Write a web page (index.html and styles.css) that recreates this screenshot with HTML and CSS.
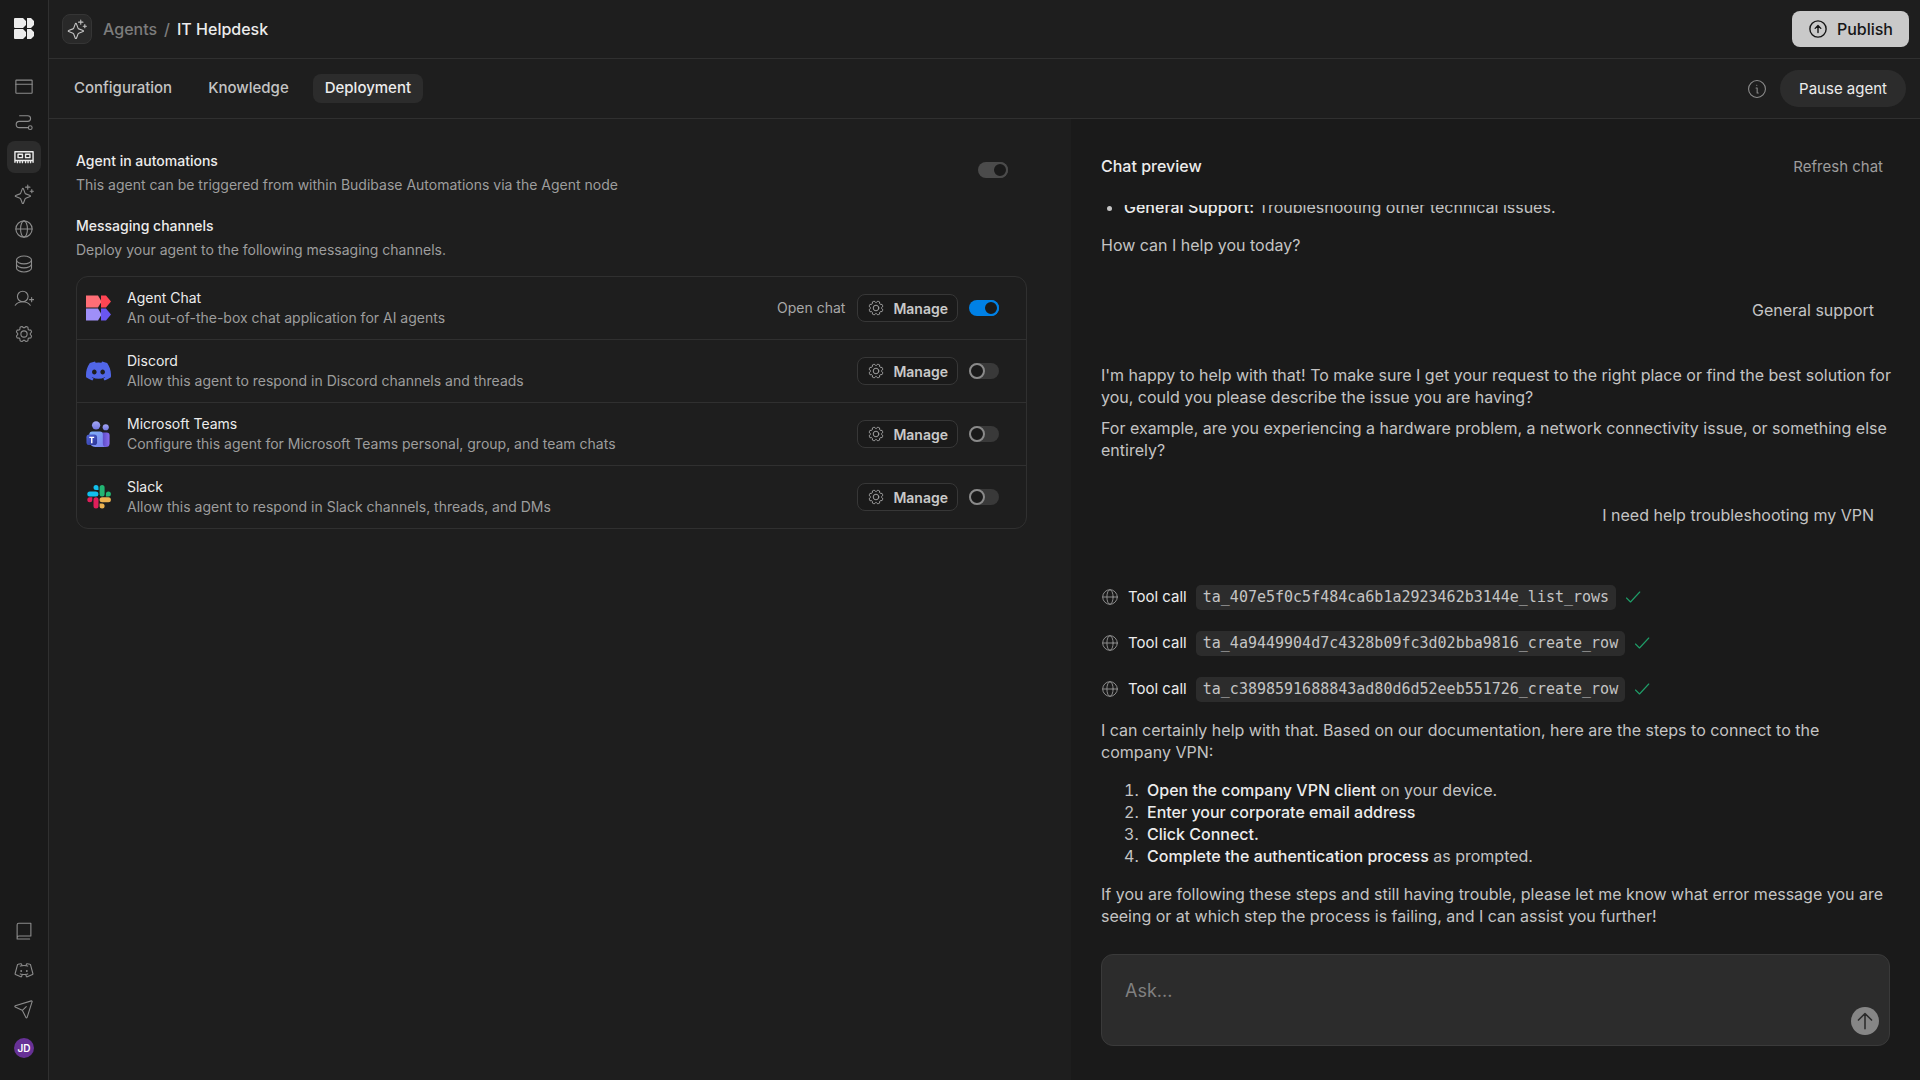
FILE: index.html
```html
<!DOCTYPE html>
<html lang="en">
<head>
  <meta charset="UTF-8">
  <meta name="viewport" content="width=device-width, initial-scale=1.0">
  <title>IT Helpdesk - Agents</title>
  <link rel="stylesheet" href="styles.css">
</head>
<body>
  <!-- Icon sprite -->
  <svg class="sprite" aria-hidden="true">
    <symbol id="i-browser" viewBox="0 0 256 256"><rect x="24" y="40" width="208" height="168" rx="6"/><path d="M24 92h208"/></symbol>
    <symbol id="i-path" viewBox="0 0 256 256"><circle cx="208" cy="200" r="24"/><path d="M72 48h104a36 36 0 0 1 0 72H68a40 40 0 0 0 0 80h116"/></symbol>
    <symbol id="i-memory" viewBox="0 0 256 256"><path d="M12 196V60h232v136M12 172h232M44 172v28M76 172v28M108 172v28M148 172v28M180 172v28M212 172v28"/><rect x="52" y="92" width="56" height="44"/><rect x="148" y="92" width="56" height="44"/></symbol>
    <symbol id="i-sparkle" viewBox="0 0 256 256"><path d="M84.27 171.73l-55.09-20.3a7.92 7.92 0 0 1 0-14.86l55.09-20.3a16 16 0 0 0 9.46-9.46l20.3-55.09a7.92 7.92 0 0 1 14.86 0l20.3 55.09a16 16 0 0 0 9.46 9.46l55.09 20.3a7.92 7.92 0 0 1 0 14.86l-55.09 20.3a16 16 0 0 0-9.46 9.46l-20.3 55.09a7.92 7.92 0 0 1-14.86 0l-20.3-55.09a16 16 0 0 0-9.46-9.46Z" transform="translate(-8 10)"/><path d="M176 12v56M148 40h56M228 72v40M208 92h40"/></symbol>
    <symbol id="i-globe" viewBox="0 0 256 256"><circle cx="128" cy="128" r="104"/><ellipse cx="128" cy="128" rx="44" ry="104"/><path d="M24 128h208"/></symbol>
    <symbol id="i-database" viewBox="0 0 256 256"><ellipse cx="128" cy="76" rx="96" ry="50"/><path d="M32 76v52c0 28 43 50 96 50s96-22 96-50V76M32 128v52c0 28 43 50 96 50s96-22 96-50v-52"/></symbol>
    <symbol id="i-user-plus" viewBox="0 0 256 256"><circle cx="112" cy="96" r="68"/><path d="M16 208c23-29 56-44 96-44s73 15 96 44M200 136h52M226 110v52"/></symbol>
    <symbol id="i-gear" viewBox="0 0 256 256"><circle cx="128" cy="128" r="40"/><path d="M41.43 178.09A99.14 99.14 0 0 1 31.36 153.8l16.78-21a81.59 81.59 0 0 1 0-9.64l-16.77-21a99.43 99.43 0 0 1 10.05-24.3l26.71-3a81 81 0 0 1 6.81-6.81l3-26.7A99.14 99.14 0 0 1 102.2 31.36l21 16.78a81.59 81.59 0 0 1 9.64 0l21-16.77a99.43 99.43 0 0 1 24.3 10.05l3 26.71a81 81 0 0 1 6.81 6.81l26.7 3a99.14 99.14 0 0 1 10.07 24.29l-16.78 21a81.59 81.59 0 0 1 0 9.64l16.77 21a99.43 99.43 0 0 1-10 24.3l-26.71 3a81 81 0 0 1-6.81 6.81l-3 26.7a99.14 99.14 0 0 1-24.29 10.07l-21-16.78a81.59 81.59 0 0 1-9.64 0l-21 16.77a99.43 99.43 0 0 1-24.3-10l-3-26.71a81 81 0 0 1-6.81-6.81Z"/></symbol>
    <symbol id="i-book" viewBox="0 0 256 256"><path d="M40 220V48a20 20 0 0 1 20-20h156v164H64a24 24 0 0 0-24 24v14h160"/></symbol>
    <symbol id="i-discord" viewBox="0 0 256 256"><path d="M153 74l6-20a8 8 0 0 1 9-6l36 6a8 8 0 0 1 7 6l31 116a8 8 0 0 1-5 9l-68 30a8 8 0 0 1-11-5l-8-27M103 74l-6-20a8 8 0 0 0-9-6l-36 6a8 8 0 0 0-7 6L14 176a8 8 0 0 0 5 9l68 30a8 8 0 0 0 11-5l8-27M80 78a179 179 0 0 1 96 0M176 178a179 179 0 0 1-96 0"/><circle cx="92" cy="140" r="5"/><circle cx="164" cy="140" r="5"/></symbol>
    <symbol id="i-send" viewBox="0 0 256 256"><path d="M232 34a8 8 0 0 0-10-10L16 86a8 8 0 0 0-1 15l90 44a8 8 0 0 1 4 4l44 88a8 8 0 0 0 15-1ZM107 147l50-50"/></symbol>
    <symbol id="i-up-circle" viewBox="0 0 256 256"><circle cx="128" cy="128" r="104"/><path d="M92 120l36-36 36 36M128 84v90"/></symbol>
    <symbol id="i-info" viewBox="0 0 256 256"><circle cx="128" cy="128" r="108"/><path d="M116 116h14v64h14M124 80h2"/></symbol>
    <symbol id="i-check" viewBox="0 0 256 256"><path d="M24 144l64 64L236 48"/></symbol>
    <symbol id="i-arrow-up" viewBox="0 0 256 256"><path d="M128 228V32M44 116l84-84 84 84"/></symbol>
  </svg>

  <div class="app">
    <nav class="rail">
      <a class="rail-logo" href="#" aria-label="Home">
        <svg viewBox="0 0 20 21"><path d="M1 0h8l3 3v4l-3 3H1a1 1 0 0 1-1-1V1a1 1 0 0 1 1-1ZM1 11h8l3 3v4l-3 3H1a1 1 0 0 1-1-1v-8a1 1 0 0 1 1-1ZM13 0h4l3 3v4l-3 3h-4ZM13 11h4l3 3v4l-3 3h-4Z"/></svg>
      </a>
      <div class="rail-group">
        <a class="rail-item" href="#" aria-label="Apps"><svg class="icon"><use href="#i-browser"/></svg></a>
        <a class="rail-item" href="#" aria-label="Automations"><svg class="icon"><use href="#i-path"/></svg></a>
        <a class="rail-item active" href="#" aria-label="Agents"><svg class="icon"><use href="#i-memory"/></svg></a>
      </div>
      <div class="rail-group">
        <a class="rail-item" href="#" aria-label="AI"><svg class="icon"><use href="#i-sparkle"/></svg></a>
        <a class="rail-item" href="#" aria-label="APIs"><svg class="icon"><use href="#i-globe"/></svg></a>
        <a class="rail-item" href="#" aria-label="Data"><svg class="icon"><use href="#i-database"/></svg></a>
        <a class="rail-item" href="#" aria-label="Invite users"><svg class="icon"><use href="#i-user-plus"/></svg></a>
        <a class="rail-item" href="#" aria-label="Settings"><svg class="icon"><use href="#i-gear"/></svg></a>
      </div>
      <div class="rail-group rail-bottom">
        <a class="rail-item" href="#" aria-label="Documentation"><svg class="icon"><use href="#i-book"/></svg></a>
        <a class="rail-item" href="#" aria-label="Discord"><svg class="icon"><use href="#i-discord"/></svg></a>
        <a class="rail-item" href="#" aria-label="Feedback"><svg class="icon"><use href="#i-send"/></svg></a>
        <button class="rail-item" type="button"><span class="avatar">JD</span></button>
      </div>
    </nav>

    <div class="page">
      <header class="topbar">
        <span class="agent-icon"><svg class="icon"><use href="#i-sparkle"/></svg></span>
        <nav class="breadcrumb">
          <a href="#">Agents</a>
          <span class="slash">/</span>
          <span class="current">IT Helpdesk</span>
        </nav>
        <button class="publish" type="button"><svg class="icon"><use href="#i-up-circle"/></svg>Publish</button>
      </header>

      <div class="tabbar">
        <nav class="tabs">
          <a class="tab" href="#">Configuration</a>
          <a class="tab" href="#">Knowledge</a>
          <a class="tab selected" href="#">Deployment</a>
        </nav>
        <svg class="icon info"><use href="#i-info"/></svg>
        <button class="pause" type="button">Pause agent</button>
      </div>

      <div class="content">
        <main class="deployment">
          <section class="automations">
            <div>
              <h2 id="automations-title">Agent in automations</h2>
              <p class="hint">This agent can be triggered from within Budibase Automations via the Agent node</p>
            </div>
            <input class="switch" type="checkbox" checked disabled aria-labelledby="automations-title">
          </section>

          <section>
            <h2>Messaging channels</h2>
            <p class="hint">Deploy your agent to the following messaging channels.</p>

            <ul class="channels">
              <li class="channel">
                <svg class="channel-logo" viewBox="0 0 25 25">
                  <path fill="#ff6e76" d="M0 0h12l3 5v2l-3 5H0Z"/>
                  <path fill="#ff4553" d="M15 0h5l5 6-5 6h-5Z"/>
                  <path fill="#9f8ff8" d="M0 13h12l3 5v2l-3 5H0Z"/>
                  <path fill="#6a56f0" d="M15 13h5l5 6-5 6h-5Z"/>
                </svg>
                <div class="channel-text">
                  <label class="channel-name" for="ch-chat">Agent Chat</label>
                  <p class="hint">An out-of-the-box chat application for AI agents</p>
                </div>
                <a class="open-chat" href="#">Open chat</a>
                <button class="manage" type="button"><svg class="icon"><use href="#i-gear"/></svg>Manage</button>
                <input class="switch" id="ch-chat" type="checkbox" checked>
              </li>
              <li class="channel">
                <svg class="channel-logo" viewBox="0 0 24 24">
                  <path fill="#5166e8" d="M20.3 4.400A19.800 19.800 0 0 0 15.400 2.800c-.2.400-.5.900-.6 1.300a18.300 18.300 0 0 0-5.500 0c-.2-.4-.4-.9-.6-1.300a19.700 19.700 0 0 0-5 1.600C.5 9.100-.3 13.600.1 18.100a19.900 19.900 0 0 0 6 3c.5-.6.900-1.300 1.300-2a12.900 12.900 0 0 1-1.900-.9l.4-.3a14.200 14.200 0 0 0 12.200 0l.4.3c-.6.3-1.200.6-1.900.9.400.7.800 1.400 1.300 2a19.800 19.800 0 0 0 6-3c.5-5.200-.8-9.700-3.600-13.700ZM8 15.300c-1.200 0-2.200-1.100-2.200-2.400S6.800 10.500 8 10.500s2.200 1.100 2.200 2.400S9.200 15.300 8 15.300Zm8 0c-1.200 0-2.200-1.100-2.200-2.400s1-2.400 2.200-2.400 2.200 1.100 2.200 2.400-1 2.400-2.200 2.400Z"/>
                </svg>
                <div class="channel-text">
                  <label class="channel-name" for="ch-discord">Discord</label>
                  <p class="hint">Allow this agent to respond in Discord channels and threads</p>
                </div>
                <button class="manage" type="button"><svg class="icon"><use href="#i-gear"/></svg>Manage</button>
                <input class="switch" id="ch-discord" type="checkbox">
              </li>
              <li class="channel">
                <svg class="channel-logo" viewBox="0 0 25 27">
                  <defs>
                    <linearGradient id="t-head" x1="0" y1="0" x2="0" y2="1"><stop offset="0" stop-color="#a5a8f5"/><stop offset="1" stop-color="#7277e0"/></linearGradient>
                    <linearGradient id="t-body" x1="0" y1="0" x2="1" y2="1"><stop offset="0" stop-color="#7fb2f6"/><stop offset="1" stop-color="#7b7cf0"/></linearGradient>
                    <linearGradient id="t-side" x1="0" y1="0" x2="1" y2="0"><stop offset="0" stop-color="#4a3fb5"/><stop offset="1" stop-color="#8b6cf0"/></linearGradient>
                    <linearGradient id="t-tile" x1="0" y1="0" x2="1" y2="1"><stop offset="0" stop-color="#5367dd"/><stop offset="1" stop-color="#2a3391"/></linearGradient>
                  </defs>
                  <circle cx="10" cy="4.500" r="4.300" fill="url(#t-head)"/>
                  <circle cx="20" cy="6.500" r="3.200" fill="url(#t-head)"/>
                  <path fill="url(#t-side)" d="M15 12h6a3 3 0 0 1 3 3v8a4 4 0 0 1-4 4h-6Z"/>
                  <path fill="url(#t-body)" d="M6 11h8a3 3 0 0 1 3 3v9a4 4 0 0 0 4 4H9a6 6 0 0 1-6-6v-7a3 3 0 0 1 3-3Z"/>
                  <rect y="14" width="11" height="11" rx="3" fill="url(#t-tile)"/>
                  <path d="M3 17h5M5.500 17v6" stroke="#fff" stroke-width="1.500"/>
                </svg>
                <div class="channel-text">
                  <label class="channel-name" for="ch-teams">Microsoft Teams</label>
                  <p class="hint">Configure this agent for Microsoft Teams personal, group, and team chats</p>
                </div>
                <button class="manage" type="button"><svg class="icon"><use href="#i-gear"/></svg>Manage</button>
                <input class="switch" id="ch-teams" type="checkbox">
              </li>
              <li class="channel">
                <svg class="channel-logo" viewBox="0 0 25 25">
                  <path fill="#e01e5a" d="M6.300 15.300a2.500 2.500 0 1 1-2.500-2.500h2.500ZM7.500 15.300a2.500 2.500 0 0 1 5 0v6.200a2.500 2.500 0 0 1-5 0Z"/>
                  <path fill="#12c0ee" d="M10 5.600a2.500 2.500 0 1 1 2.500-2.500v2.500ZM10 6.900a2.500 2.500 0 0 1 0 5H3.800a2.500 2.500 0 0 1 0-5Z"/>
                  <path fill="#22b573" d="M18.900 9.400a2.500 2.500 0 1 1 2.500 2.500h-2.500ZM17.600 9.400a2.500 2.500 0 0 1-5 0V3.100a2.500 2.500 0 0 1 5 0Z" transform="translate(1)"/>
                  <path fill="#ecb250" d="M15.100 19a2.500 2.500 0 1 1-2.500 2.500V19ZM15.100 17.800a2.500 2.500 0 0 1 0-5h6.300a2.500 2.500 0 0 1 0 5Z" transform="translate(1)"/>
                </svg>
                <div class="channel-text">
                  <label class="channel-name" for="ch-slack">Slack</label>
                  <p class="hint">Allow this agent to respond in Slack channels, threads, and DMs</p>
                </div>
                <button class="manage" type="button"><svg class="icon"><use href="#i-gear"/></svg>Manage</button>
                <input class="switch" id="ch-slack" type="checkbox">
              </li>
            </ul>
          </section>
        </main>

        <aside class="preview">
          <div class="preview-head">
            <h2>Chat preview</h2>
            <button class="refresh" type="button">Refresh chat</button>
          </div>

          <div class="messages">
            <div class="message">
              <ul>
                <li><strong>General Support:</strong> Troubleshooting other technical issues.</li>
              </ul>
              <p>How can I help you today?</p>
            </div>
            <div class="message user">General support</div>
            <div class="message">
              <p>I'm happy to help with that! To make sure I get your request to the right place or find the best solution for you, could you please describe the issue you are having?</p>
              <p>For example, are you experiencing a hardware problem, a network connectivity issue, or something else entirely?</p>
            </div>
            <div class="message user">I need help troubleshooting my VPN</div>
            <div class="message">
              <div class="tools">
                <div class="tool"><svg class="icon"><use href="#i-globe"/></svg>Tool call<code>ta_407e5f0c5f484ca6b1a2923462b3144e_list_rows</code><svg class="icon check"><use href="#i-check"/></svg></div>
                <div class="tool"><svg class="icon"><use href="#i-globe"/></svg>Tool call<code>ta_4a9449904d7c4328b09fc3d02bba9816_create_row</code><svg class="icon check"><use href="#i-check"/></svg></div>
                <div class="tool"><svg class="icon"><use href="#i-globe"/></svg>Tool call<code>ta_c3898591688843ad80d6d52eeb551726_create_row</code><svg class="icon check"><use href="#i-check"/></svg></div>
              </div>
              <p>I can certainly help with that. Based on our documentation, here are the steps to connect to the company VPN:</p>
              <ol>
                <li><strong>Open the company VPN client</strong> on your device.</li>
                <li><strong>Enter your corporate email address</strong></li>
                <li><strong>Click Connect.</strong></li>
                <li><strong>Complete the authentication process</strong> as prompted.</li>
              </ol>
              <p>If you are following these steps and still having trouble, please let me know what error message you are seeing or at which step the process is failing, and I can assist you further!</p>
            </div>
          </div>

          <form class="composer">
            <textarea placeholder="Ask..." aria-label="Ask"></textarea>
            <button class="send" type="button" aria-label="Send"><svg class="icon"><use href="#i-arrow-up"/></svg></button>
          </form>
        </aside>
      </div>
    </div>
  </div>
</body>
</html>
```

FILE: styles.css
```css
*,
*::before {
  box-sizing: border-box;
}

body {
  margin: 0;
  font-family: Inter, "Liberation Sans", sans-serif;
  font-size: 14px;
  line-height: 20px;
  color: #ececec;
  background: #1e1e1e;
}

h2,
p,
ul,
ol {
  margin: 0;
  padding: 0;
}

a {
  color: inherit;
  text-decoration: none;
}

button {
  font-family: inherit;
  color: inherit;
  border: none;
  background: none;
  padding: 0;
  cursor: pointer;
}

.sprite {
  display: none;
}

.icon {
  flex: none;
  width: 20px;
  height: 20px;
  fill: none;
  stroke: currentColor;
  stroke-width: 14;
  stroke-linecap: round;
  stroke-linejoin: round;
}

.app {
  display: flex;
  height: 100vh;
}

/* Left rail */
.rail {
  display: flex;
  flex-direction: column;
  align-items: center;
  flex: none;
  width: 49px;
  padding: 18px 0 16px;
  background: #1a1a1a;
  border-right: 1px solid #303030;
}

.rail-logo {
  height: 21px;
  margin-bottom: 32px;
}

.rail-logo svg {
  width: 20px;
  height: 21px;
  fill: #ececec;
}

.rail-group {
  display: flex;
  flex-direction: column;
  gap: 3px;
  margin-bottom: 5px;
}

.rail-item {
  display: flex;
  align-items: center;
  justify-content: center;
  width: 34px;
  height: 32px;
  border-radius: 8px;
  color: #8c8c8c;
}

.rail-item.active {
  background: #2c2c2c;
  color: #ececec;
}

.rail-item.active .icon {
  stroke-width: 18;
}

.rail-bottom {
  gap: 7px;
  margin: auto 0 0;
}

.avatar {
  width: 20px;
  height: 20px;
  border-radius: 50%;
  background: #673196;
  color: #fff;
  font-size: 10px;
  font-weight: 600;
  line-height: 20px;
  text-align: center;
}

/* Header */
.page {
  display: flex;
  flex-direction: column;
  flex: 1;
  min-width: 0;
}

.topbar,
.tabbar {
  display: flex;
  align-items: center;
  flex: none;
  border-bottom: 1px solid #303030;
}

.topbar {
  height: 59px;
  padding: 0 11px 0 13px;
}

.agent-icon {
  display: flex;
  align-items: center;
  justify-content: center;
  width: 30px;
  height: 30px;
  margin-right: 11px;
  border: 1px solid #353535;
  border-radius: 8px;
  background: #292929;
  color: #c4c4c4;
}

.breadcrumb {
  display: flex;
  gap: 7px;
  flex: 1;
  font-size: 16px;
  font-weight: 500;
  color: #7c7c7c;
}

.breadcrumb .current {
  color: #ececec;
}

.publish {
  display: flex;
  align-items: center;
  gap: 9px;
  height: 36px;
  padding: 0 16px;
  border-radius: 8px;
  background: #c9c9c9;
  color: #161616;
  font-size: 16px;
  font-weight: 500;
}

.publish .icon {
  stroke-width: 18;
}

.tabbar {
  height: 60px;
  padding: 0 14px 0 13px;
}

.tabs {
  display: flex;
  gap: 12px;
  flex: 1;
}

.tab {
  padding: 4px 12px 5px;
  border-radius: 8px;
  font-size: 15px;
  font-weight: 500;
  color: #c4c4c4;
}

.tab.selected {
  background: #2c2c2c;
  color: #ececec;
}

.info {
  color: #8c8c8c;
  margin-right: 13px;
}

.pause {
  height: 37px;
  padding: 0 19px;
  border-radius: 20px;
  background: #2c2c2c;
  font-size: 15px;
}

/* Deployment settings */
.content {
  display: grid;
  grid-template-columns: minmax(0, 1fr) 849px;
  flex: 1;
  min-height: 0;
}

.deployment {
  padding: 32px 44px 32px 27px;
}

.deployment h2 {
  margin-bottom: 4px;
  font-size: 14px;
  font-weight: 500;
}

.hint {
  color: #9d9d9d;
}

.automations {
  display: flex;
  justify-content: space-between;
  margin-bottom: 21px;
  padding-right: 19px;
}

.automations .switch {
  margin-top: 11px;
}

.channels {
  margin-top: 16px;
  border: 1px solid #303030;
  border-radius: 12px;
  list-style: none;
}

.channel {
  display: flex;
  align-items: center;
  padding: 11px 27px 11px 9px;
}

.channel + .channel {
  border-top: 1px solid #303030;
}

.channel-logo {
  flex: none;
  width: 25px;
  height: 26px;
  margin-right: 16px;
}

.channel-text {
  flex: 1;
}

.channel-name {
  display: block;
}

.open-chat {
  margin-right: 12px;
  color: #a8a8a8;
}

.manage {
  display: flex;
  align-items: center;
  gap: 8px;
  height: 28px;
  margin-right: 11px;
  padding: 0 9px;
  border: 1px solid #373737;
  border-radius: 8px;
  background: #1a1a1a;
  color: #c9c9c9;
  font-size: 14px;
  font-weight: 600;
}

.manage .icon {
  width: 18px;
  height: 18px;
  color: #a0a0a0;
}

/* Toggle */
.switch {
  display: flex;
  flex: none;
  appearance: none;
  width: 30px;
  height: 16px;
  margin: 0;
  border-radius: 8px;
  background: #393939;
}

.switch::before {
  content: "";
  width: 16px;
  height: 16px;
  border: 2px solid #8a8a8a;
  border-radius: 50%;
  background: #1a1a1a;
}

.switch:checked {
  justify-content: flex-end;
  background: #0081e6;
}

.switch:checked::before {
  border-color: #0081e6;
}

.switch:disabled {
  background: #4b4b4b;
}

.switch:disabled::before {
  border-color: #4b4b4b;
}

/* Chat preview */
.preview {
  display: flex;
  flex-direction: column;
  min-height: 0;
  padding: 0 30px 34px;
  background: #1a1a1a;
  font-size: 16px;
  line-height: 22px;
}

.preview-head {
  display: flex;
  align-items: center;
  justify-content: space-between;
  flex: none;
  height: 86px;
  padding: 8px 7px 0 0;
}

.preview-head h2 {
  font-size: 16px;
  font-weight: 500;
}

.refresh {
  font-size: 15px;
  color: #9d9d9d;
}

.messages {
  display: flex;
  flex-direction: column;
  justify-content: flex-end;
  gap: 31px;
  flex: 1;
  min-height: 0;
  margin-right: -2px;
  padding-bottom: 27px;
  overflow: hidden;
  color: #c4c4c4;
}

.message p + p {
  margin-top: 9px;
}

.message ul,
.message ol {
  margin: 16px 0;
  padding-left: 23px;
}

.message ol {
  padding-left: 42px;
}

.message ol li {
  padding-left: 4px;
}

.message strong {
  font-weight: 500;
  color: #ececec;
}

.message.user {
  align-self: flex-end;
  padding: 12px 18px;
}

.tools {
  display: flex;
  flex-direction: column;
  gap: 20px;
  margin: 15px 0 17px;
}

.tool {
  display: flex;
  align-items: center;
  height: 26px;
  color: #ececec;
  font-size: 15px;
}

.tool .icon {
  width: 18px;
  height: 18px;
  margin-right: 9px;
  color: #8c8c8c;
}

.tool code {
  margin: 0 9px;
  padding: 2px 7px 3px;
  border-radius: 5px;
  background: #2c2c2c;
  color: #c4c4c4;
  font-family: "DejaVu Sans Mono", monospace;
  font-size: 15px;
  line-height: 20px;
}

.tool .check {
  width: 16px;
  height: 16px;
  margin: 0;
  color: #1f9d68;
  stroke-width: 18;
}

.composer {
  display: flex;
  align-items: flex-end;
  flex: none;
  height: 92px;
  padding: 10px;
  border: 1px solid #3a3a3a;
  border-radius: 12px;
  background: #2c2c2c;
}

.composer textarea {
  flex: 1;
  align-self: stretch;
  padding: 14px 13px;
  border: none;
  outline: none;
  resize: none;
  background: none;
  color: #ececec;
  font-family: inherit;
  font-size: 18px;
  line-height: 24px;
}

.composer textarea::placeholder {
  color: #808080;
}

.send {
  display: flex;
  align-items: center;
  justify-content: center;
  width: 28px;
  height: 28px;
  border-radius: 50%;
  background: #868686;
  color: #2c2c2c;
}

.send .icon {
  stroke-width: 20;
}
```
